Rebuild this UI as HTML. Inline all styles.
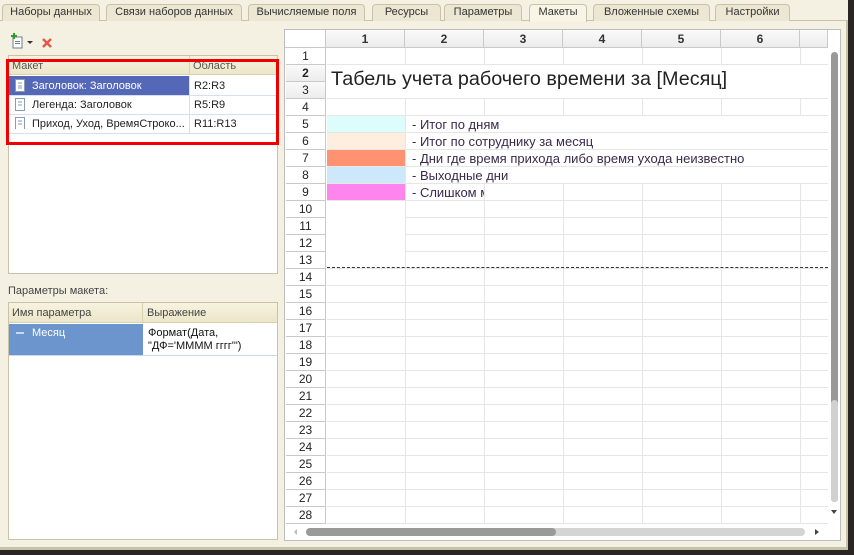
<!DOCTYPE html>
<html><head><meta charset="utf-8"><style>
*{margin:0;padding:0;box-sizing:border-box}
body{width:854px;height:555px;background:#f4f1e2;font-family:"Liberation Sans",sans-serif;font-size:11px;color:#222;position:relative;overflow:hidden}
.a{position:absolute}
.tab{position:absolute;top:4px;height:17px;border:1px solid #c8c3a8;border-bottom:none;border-radius:4px 4px 0 0;background:#ebe7d2;color:#333;font-size:11px;text-align:center;line-height:15px}
.rn{position:absolute;left:286px;width:40px;height:17px;text-align:center;font-size:12px;line-height:17px;color:#222;background:#fff;border-bottom:1px solid #c9c9c9;border-right:1px solid #c9c9c9}
.ch{position:absolute;top:30px;height:18px;background:linear-gradient(#fafafa,#ececec);border-right:1px solid #c9c9c9;border-bottom:1px solid #c9c9c9;text-align:center;font-weight:bold;font-size:12px;line-height:18px;color:#333}
.lg{position:absolute;left:412px;font-size:13px;color:#3a2a4a;line-height:17px}
</style></head><body>
<div class="a" style="left:0;top:20px;width:854px;height:1px;background:#c8c3a8"></div>
<div class="tab" style="left:2px;width:98px">Наборы данных</div>
<div class="tab" style="left:106px;width:136px">Связи наборов данных</div>
<div class="tab" style="left:248px;width:117px">Вычисляемые поля</div>
<div class="tab" style="left:372px;width:69px">Ресурсы</div>
<div class="tab" style="left:444px;width:78px">Параметры</div>
<div class="tab" style="left:529px;width:58px;background:#f8f5e6;height:18px">Макеты</div>
<div class="tab" style="left:593px;width:117px">Вложенные схемы</div>
<div class="tab" style="left:715px;width:75px">Настройки</div>
<div class="a" style="left:846px;top:20px;width:2px;height:528px;background:#c8c3a8"></div>
<div class="a" style="left:0;top:547px;width:854px;height:3px;background:#c8c3a8"></div>
<div class="a" style="left:0;top:550px;width:854px;height:5px;background:#2a2422"></div>
<div class="a" style="left:848px;top:0;width:6px;height:555px;background:#2a2422"></div>

<svg class="a" style="left:10px;top:33px" width="48" height="16"><rect x="3" y="4" width="9" height="11" fill="#fff" stroke="#6b7c95"/><rect x="5" y="8" width="5" height="1" fill="#6b7c95"/><rect x="5" y="10" width="5" height="1" fill="#6b7c95"/><path d="M1 3h6M4 0v6" stroke="#2a9d2a" stroke-width="2"/><path d="M17 8l3 3 3-3z" fill="#333"/><path d="M33 6l8 8M41 6l-8 8" stroke="#e05a4a" stroke-width="2.5"/></svg>

<div class="a" style="left:8px;top:55px;width:270px;height:219px;background:#fff;border:1px solid #c8c3a8"></div>
<div class="a" style="left:9px;top:56px;width:268px;height:19px;background:linear-gradient(#f7f3df,#ece6c9);border-bottom:1px solid #d8d2b0"></div>
<div class="a" style="left:189px;top:56px;width:1px;height:19px;background:#d8d2b0"></div>
<div class="a" style="left:12px;top:60px;color:#555">Макет</div>
<div class="a" style="left:193px;top:60px;color:#555">Область</div>
<div class="a" style="left:9px;top:76px;width:180px;height:19px;background:#5568b8"></div>
<div class="a" style="left:9px;top:95px;width:268px;height:1px;background:#d6dff0"></div>
<div class="a" style="left:9px;top:114px;width:268px;height:1px;background:#d6dff0"></div>
<div class="a" style="left:9px;top:133px;width:268px;height:1px;background:#d6dff0"></div>
<div class="a" style="left:189px;top:76px;width:1px;height:57px;background:#d6dff0"></div>
<svg class="a" style="left:14px;top:79px" width="12" height="50"><g fill="#fff" stroke="#8a9ab5"><rect x="1.5" y="0.5" width="9" height="12"/><rect x="1.5" y="19.5" width="9" height="12"/><rect x="1.5" y="38.5" width="9" height="12"/></g><path d="M4 4h4M4 7h4M4 9h4M4 23h4M4 26h4M4 42h4M4 45h4" stroke="#8a9ab5"/></svg>
<div class="a" style="left:32px;top:80px;color:#fff">Заголовок: Заголовок</div>
<div class="a" style="left:32px;top:99px">Легенда: Заголовок</div>
<div class="a" style="left:32px;top:118px">Приход, Уход, ВремяСтроко...</div>
<div class="a" style="left:194px;top:80px">R2:R3</div>
<div class="a" style="left:194px;top:99px">R5:R9</div>
<div class="a" style="left:194px;top:118px">R11:R13</div>
<div class="a" style="left:6px;top:59px;width:273px;height:86px;border:3px solid #ee0000"></div>

<div class="a" style="left:8px;top:285px;color:#444;font-size:11px">Параметры макета:</div>
<div class="a" style="left:8px;top:302px;width:270px;height:238px;background:#fff;border:1px solid #c8c3a8"></div>
<div class="a" style="left:9px;top:303px;width:268px;height:20px;background:linear-gradient(#f7f3df,#ece6c9);border-bottom:1px solid #d8d2b0"></div>
<div class="a" style="left:142px;top:303px;width:1px;height:20px;background:#d8d2b0"></div>
<div class="a" style="left:12px;top:307px;color:#444">Имя параметра</div>
<div class="a" style="left:147px;top:307px;color:#444">Выражение</div>
<div class="a" style="left:9px;top:324px;width:134px;height:31px;background:#6b95cc"></div>
<div class="a" style="left:9px;top:355px;width:268px;height:1px;background:#c8d6ee"></div>
<div class="a" style="left:16px;top:332px;width:8px;height:2px;background:#c8d8f0"></div>
<div class="a" style="left:32px;top:327px;color:#fff">Месяц</div>
<div class="a" style="left:148px;top:327px;line-height:13px;color:#111">Формат(Дата,<br>"ДФ='ММММ гггг'")</div>

<div class="a" style="left:284px;top:29px;width:557px;height:512px;background:#fff;border:1px solid #bdbdbd"></div>
<div class="a" style="left:285px;top:30px;width:41px;height:18px;background:#fff;border-right:1px solid #c9c9c9;border-bottom:1px solid #c9c9c9"></div>
<div class="ch" style="left:326px;width:79px">1</div>
<div class="ch" style="left:405px;width:79px">2</div>
<div class="ch" style="left:484px;width:79px">3</div>
<div class="ch" style="left:563px;width:79px">4</div>
<div class="ch" style="left:642px;width:79px">5</div>
<div class="ch" style="left:721px;width:79px">6</div>
<div class="ch" style="left:800px;width:28px"></div>
<div class="a" style="left:327px;top:48px;width:501px;height:476px;background-image:linear-gradient(90deg,transparent 78px,#e6e6e6 78px),linear-gradient(transparent 16px,#e6e6e6 16px);background-size:79px 100%,100% 17px"></div>
<div class="a" style="left:327px;top:65px;width:501px;height:33px;background:#fff"></div>
<div class="a" style="left:331px;top:68px;font-size:19.8px;color:#222">Табель учета рабочего времени за [Месяц]</div>
<div class="a" style="left:406px;top:116px;width:422px;height:67px;background:repeating-linear-gradient(#fff 0 16px,#e6e6e6 16px 17px)"></div>
<div class="a" style="left:406px;top:184px;width:78px;height:16px;background:#fff"></div>
<div class="a" style="left:327px;top:116px;width:78px;height:16px;background:#dcfdfb"></div>
<div class="a" style="left:327px;top:133px;width:78px;height:16px;background:#feeedf"></div>
<div class="a" style="left:327px;top:150px;width:78px;height:16px;background:#ff9270"></div>
<div class="a" style="left:327px;top:167px;width:78px;height:16px;background:#cde7fb"></div>
<div class="a" style="left:327px;top:184px;width:78px;height:16px;background:#ff85ee"></div>
<div class="lg" style="top:116px">- Итог по дням</div>
<div class="lg" style="top:133px">- Итог по сотруднику за месяц</div>
<div class="lg" style="top:150px">- Дни где время прихода либо время ухода неизвестно</div>
<div class="lg" style="top:167px">- Выходные дни</div>
<div class="lg" style="top:184px;width:72px;overflow:hidden;white-space:nowrap">- Слишком мало</div>
<div class="a" style="left:327px;top:201px;width:78px;height:67px;background:#fff"></div>
<div class="a" style="left:327px;top:267px;width:501px;height:0;border-top:1px dashed #333"></div>

<div class="rn" style="top:48px">1</div>
<div class="rn" style="top:65px;background:linear-gradient(#fafafa,#ececec);font-weight:bold">2</div>
<div class="rn" style="top:82px;background:linear-gradient(#fafafa,#ececec)">3</div>
<div class="rn" style="top:99px">4</div>
<div class="rn" style="top:116px">5</div>
<div class="rn" style="top:133px">6</div>
<div class="rn" style="top:150px">7</div>
<div class="rn" style="top:167px">8</div>
<div class="rn" style="top:184px">9</div>
<div class="rn" style="top:201px">10</div>
<div class="rn" style="top:218px">11</div>
<div class="rn" style="top:235px">12</div>
<div class="rn" style="top:252px">13</div>
<div class="rn" style="top:269px">14</div>
<div class="rn" style="top:286px">15</div>
<div class="rn" style="top:303px">16</div>
<div class="rn" style="top:320px">17</div>
<div class="rn" style="top:337px">18</div>
<div class="rn" style="top:354px">19</div>
<div class="rn" style="top:371px">20</div>
<div class="rn" style="top:388px">21</div>
<div class="rn" style="top:405px">22</div>
<div class="rn" style="top:422px">23</div>
<div class="rn" style="top:439px">24</div>
<div class="rn" style="top:456px">25</div>
<div class="rn" style="top:473px">26</div>
<div class="rn" style="top:490px">27</div>
<div class="rn" style="top:507px">28</div>
<div class="a" style="left:828px;top:30px;width:12px;height:494px;background:#fff"></div>
<div class="a" style="left:831px;top:52px;width:7px;height:450px;background:#999;border-radius:4px"></div>
<div class="a" style="left:831px;top:400px;width:7px;height:102px;background:#d0d0d0;border-radius:4px"></div>
<div class="a" style="left:831px;top:510px;width:0;height:0;border-left:3px solid transparent;border-right:3px solid transparent;border-top:4px solid #444"></div>
<div class="a" style="left:285px;top:524px;width:555px;height:16px;background:#fff"></div>
<div class="a" style="left:306px;top:528px;width:499px;height:8px;background:#d4d4d4;border-radius:4px"></div>
<div class="a" style="left:306px;top:528px;width:250px;height:8px;background:#999;border-radius:4px"></div>
<div class="a" style="left:294px;top:529px;width:0;height:0;border-top:3px solid transparent;border-bottom:3px solid transparent;border-right:3px solid #bbb"></div>
<div class="a" style="left:815px;top:529px;width:0;height:0;border-top:3px solid transparent;border-bottom:3px solid transparent;border-left:4px solid #444"></div>
</body></html>
